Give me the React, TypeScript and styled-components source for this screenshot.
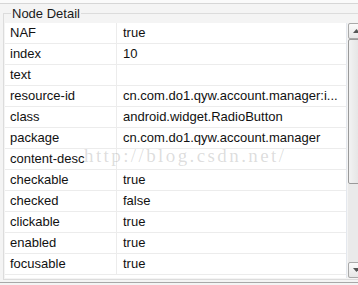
import React from "react";
import styled, { createGlobalStyle } from "styled-components";

const Global = createGlobalStyle`
  html, body { margin: 0; padding: 0; background: #ffffff; }
  body { font-family: "Liberation Sans", Arial, sans-serif; }
`;

const Root = styled.div`
  position: relative;
  width: 358px;
  height: 285px;
  overflow: hidden;
  background: #f4f4f4;
  display: flex;
  flex-direction: column;
`;

const TopStrip = styled.div`
  height: 3px;
  flex: none;
  background: #fafafa;
  border-bottom: 1px solid #d6d6d6;
`;

const Group = styled.fieldset`
  margin: 2px 0 0 3px;
  padding: 0 0 0 1px;
  border: 1px solid #dcdcdc;
  border-right: none;
  width: 370px;
  box-sizing: border-box;
  height: 274px;
  flex: none;
  min-width: 0;
`;

const Legend = styled.legend`
  margin-left: 6px;
  padding: 0 1px;
  font-size: 13px;
  line-height: 15px;
  color: #1a1a1a;
`;

const Body = styled.div`
  display: flex;
  margin-top: 2px;
  height: 255px;
`;

const Table = styled.div`
  width: 341px;
  flex: none;
  background: #ffffff;
  border-right: 1px solid #e4e8ee;
  display: flex;
  flex-direction: column;
`;

const Row = styled.div`
  display: grid;
  grid-template-columns: 112px 1fr;
  height: 20px;
  border-bottom: 1px solid #ececec;
`;

const Cell = styled.div<{ $divider?: boolean }>`
  font-size: 13px;
  line-height: 20px;
  color: #111;
  padding-left: ${(p) => (p.$divider ? "5px" : "6px")};
  border-right: ${(p) => (p.$divider ? "1px solid #ececec" : "none")};
  white-space: nowrap;
  overflow: hidden;
`;

const Scrollbar = styled.div`
  width: 17px;
  flex: none;
  background: #eaeaea;
  display: flex;
  flex-direction: column;
  margin-left: 1px;
`;

const ArrowBtn = styled.div`
  height: 16px;
  flex: none;
  box-sizing: border-box;
  border: 1px solid #a9a9a9;
  border-radius: 2px;
  background: linear-gradient(#fbfbfb, #e6e6e6);
  display: flex;
  align-items: center;
  justify-content: center;
`;

const Thumb = styled.div`
  height: 145px;
  flex: none;
  box-sizing: border-box;
  border: 1px solid #9a9a9a;
  border-radius: 2px;
  background: linear-gradient(90deg, #f2f2f2, #dedede);
`;

const Track = styled.div`
  flex: 1;
`;

const Watermark = styled.div`
  position: absolute;
  left: 84px;
  top: 145px;
  font-family: "Liberation Serif", "DejaVu Serif", serif;
  font-size: 19px;
  letter-spacing: 2.4px;
  color: rgba(150, 150, 150, 0.32);
  pointer-events: none;
  white-space: nowrap;
`;

const BottomLine = styled.div`
  height: 2px;
  flex: none;
  margin-top: 2px;
  border-top: 1px solid #a8a8a8;
  border-bottom: 1px solid #d4d4d4;
`;

const rows: [string, string][] = [
  ["NAF", "true"],
  ["index", "10"],
  ["text", ""],
  ["resource-id", "cn.com.do1.qyw.account.manager:i..."],
  ["class", "android.widget.RadioButton"],
  ["package", "cn.com.do1.qyw.account.manager"],
  ["content-desc", ""],
  ["checkable", "true"],
  ["checked", "false"],
  ["clickable", "true"],
  ["enabled", "true"],
  ["focusable", "true"],
];

export default function App() {
  return (
    <>
      <Global />
      <Root>
        <TopStrip />
        <Group>
          <Legend>Node Detail</Legend>
          <Body>
            <Table>
              {rows.map(([k, v]) => (
                <Row key={k}>
                  <Cell $divider>{k}</Cell>
                  <Cell>{v}</Cell>
                </Row>
              ))}
            </Table>
            <Scrollbar>
              <ArrowBtn>
                <svg width="7" height="4" viewBox="0 0 7 4">
                  <path d="M0 4 L3.5 0 L7 4 Z" fill="#555" />
                </svg>
              </ArrowBtn>
              <Thumb />
              <Track />
              <ArrowBtn>
                <svg width="7" height="4" viewBox="0 0 7 4">
                  <path d="M0 0 L3.5 4 L7 0 Z" fill="#555" />
                </svg>
              </ArrowBtn>
            </Scrollbar>
          </Body>
        </Group>
        <BottomLine />
        <Watermark>http://blog.csdn.net/</Watermark>
      </Root>
    </>
  );
}
